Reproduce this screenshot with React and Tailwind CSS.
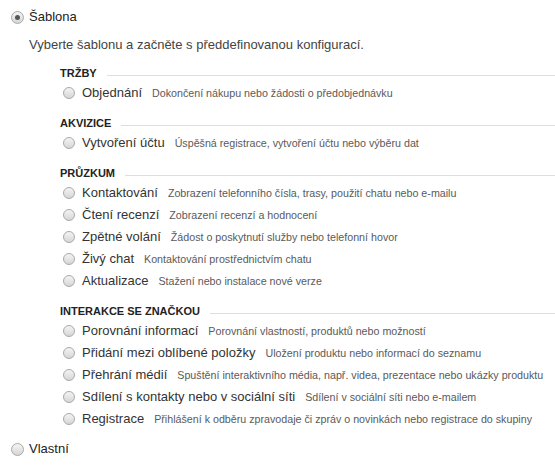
import React from "react";

function Radio({ checked = false, size = 13 }) {
  return (
    <span
      className={
        "flex shrink-0 items-center justify-center rounded-full border border-[#a9a9a9] bg-linear-to-b from-[#f4f4f4] to-[#d6d6d6] " +
        (size === 13 ? "w-[13px] h-[13px]" : "w-[12px] h-[12px]")
      }
    >
      {checked && <span className="block w-[5px] h-[5px] rounded-full bg-[#555]" />}
    </span>
  );
}

const sections = [
  {
    title: "Tržby",
    items: [["Objednání", "Dokončení nákupu nebo žádosti o předobjednávku"]],
  },
  {
    title: "Akvizice",
    items: [["Vytvoření účtu", "Úspěšná registrace, vytvoření účtu nebo výběru dat"]],
  },
  {
    title: "Průzkum",
    items: [
      ["Kontaktování", "Zobrazení telefonního čísla, trasy, použití chatu nebo e-mailu"],
      ["Čtení recenzí", "Zobrazení recenzí a hodnocení"],
      ["Zpětné volání", "Žádost o poskytnutí služby nebo telefonní hovor"],
      ["Živý chat", "Kontaktování prostřednictvím chatu"],
      ["Aktualizace", "Stažení nebo instalace nové verze"],
    ],
  },
  {
    title: "Interakce se značkou",
    items: [
      ["Porovnání informací", "Porovnání vlastností, produktů nebo možností"],
      ["Přidání mezi oblíbené položky", "Uložení produktu nebo informací do seznamu"],
      ["Přehrání médií", "Spuštění interaktivního média, např. videa, prezentace nebo ukázky produktu"],
      ["Sdílení s kontakty nebo v sociální síti", "Sdílení v sociální síti nebo e-mailem"],
      ["Registrace", "Přihlášení k odběru zpravodaje či zpráv o novinkách nebo registrace do skupiny"],
    ],
  },
];

export default function App() {
  return (
    <div className="w-[555px] h-[475px] bg-white pt-[6px] font-['Liberation_Sans',Arial,sans-serif] text-[13px] text-[#222] overflow-hidden">
      <div className="flex h-[22px] items-center gap-[5px] pl-[11px]">
        <Radio checked />
        <span>Šablona</span>
      </div>
      <div className="mt-[8px] h-[18px] pl-[29px] leading-[18px] text-[#444]">
        Vyberte šablonu a začněte s předdefinovanou konfigurací.
      </div>
      <div className="pl-[60px] mt-[11px] flex flex-col gap-[11px]">
        {sections.map((s) => (
          <div key={s.title} className="flex flex-col gap-[1px]">
            <div className="flex h-[16px] items-center">
              <span className="text-[11px] font-bold uppercase text-[#222] leading-none">{s.title}</span>
              <span className="ml-[10px] mt-[4px] h-px flex-1 bg-[#dedede]" />
            </div>
            <div className="flex flex-col">
              {s.items.map(([label, desc]) => (
                <div key={label} className="flex h-[22px] items-center pl-[3px]">
                  <Radio size={12} />
                  <span className="ml-[7px] whitespace-nowrap text-[#333]">{label}</span>
                  <span className="ml-[10px] whitespace-nowrap text-[10.7px] text-[#5a5a5a]">{desc}</span>
                </div>
              ))}
            </div>
          </div>
        ))}
      </div>
      <div className="mt-[8px] flex h-[22px] items-center gap-[5px] pl-[11px]">
        <Radio />
        <span>Vlastní</span>
      </div>
    </div>
  );
}
